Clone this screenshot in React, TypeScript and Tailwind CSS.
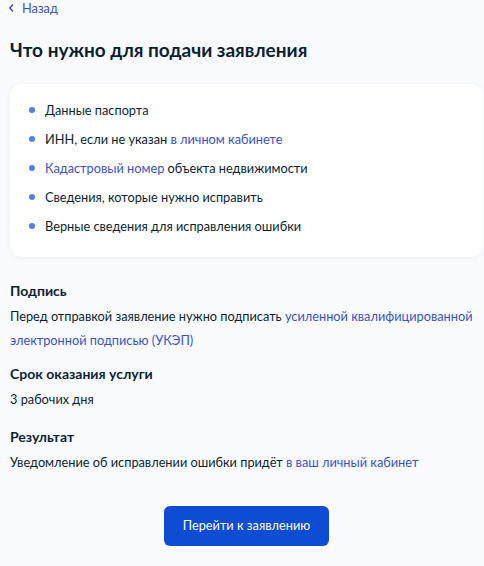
const items: { pre?: string; link?: string; post?: string }[] = [
  { pre: "Данные паспорта" },
  { pre: "ИНН, если не указан ", link: "в личном кабинете" },
  { link: "Кадастровый номер", post: " объекта недвижимости" },
  { pre: "Сведения, которые нужно исправить" },
  { pre: "Верные сведения для исправления ошибки" },
];

const App = () => {
  return (
    <div
      className="min-h-[566px] bg-[#f9fbfe] pl-[10px] pr-[1px] text-[#0b1f33]"
      style={{ fontFamily: "Lato, 'Noto Sans', sans-serif" }}
    >
      <a href="#" className="flex items-center gap-[7px] text-[12.75px] leading-[16px] text-[#3a52d0]">
        <svg width="7" height="10" viewBox="0 0 7 10" className="-ml-[2px]">
          <path d="M5 1.5 1.8 5 5 8.5" fill="none" stroke="currentColor" strokeWidth="1.5" />
        </svg>
        Назад
      </a>

      <h1 className="mt-[22px] text-[19px] font-bold leading-[24px]">Что нужно для подачи заявления</h1>

      <div className="mt-[22px] rounded-[12px] bg-white pl-[19px] pr-[20px] pt-[16px] pb-[21px] shadow-[0_1px_6px_rgba(11,31,51,0.06)]">
        <ul className="flex flex-col gap-[9px]">
          {items.map((it, i) => (
            <li key={i} className="flex items-center gap-[10px] text-[12.75px] leading-[20px]">
              <span className="h-[6px] w-[6px] shrink-0 rounded-full bg-[#4f7fe8]" />
              <span>
                {it.pre}
                {it.link && <a href="#" className="text-[#3a52d0]">{it.link}</a>}
                {it.post}
              </span>
            </li>
          ))}
        </ul>
      </div>

      <h2 className="mt-[24px] text-[14px] font-bold leading-[20px]">Подпись</h2>
      <p className="mt-[3px] text-[12.75px] leading-[24px]">
        Перед отправкой заявление нужно подписать{" "}
        <a href="#" className="text-[#3a52d0]">усиленной квалифицированной электронной подписью (УКЭП)</a>
      </p>

      <h2 className="mt-[12px] text-[14px] font-bold leading-[20px]">Срок оказания услуги</h2>
      <p className="mt-[3px] text-[12.75px] leading-[24px]">3 рабочих дня</p>

      <h2 className="mt-[16px] text-[14px] font-bold leading-[20px]">Результат</h2>
      <p className="mt-[3px] text-[12.75px] leading-[24px]">
        Уведомление об исправлении ошибки придёт <a href="#" className="text-[#3a52d0]">в ваш личный кабинет</a>
      </p>

      <div className="flex justify-center pt-[32px]">
        <button className="h-[40px] w-[165px] rounded-[6px] bg-[#0d4cd3] text-[12.75px] text-white">
          Перейти к заявлению
        </button>
      </div>
    </div>
  );
};

export default App;
